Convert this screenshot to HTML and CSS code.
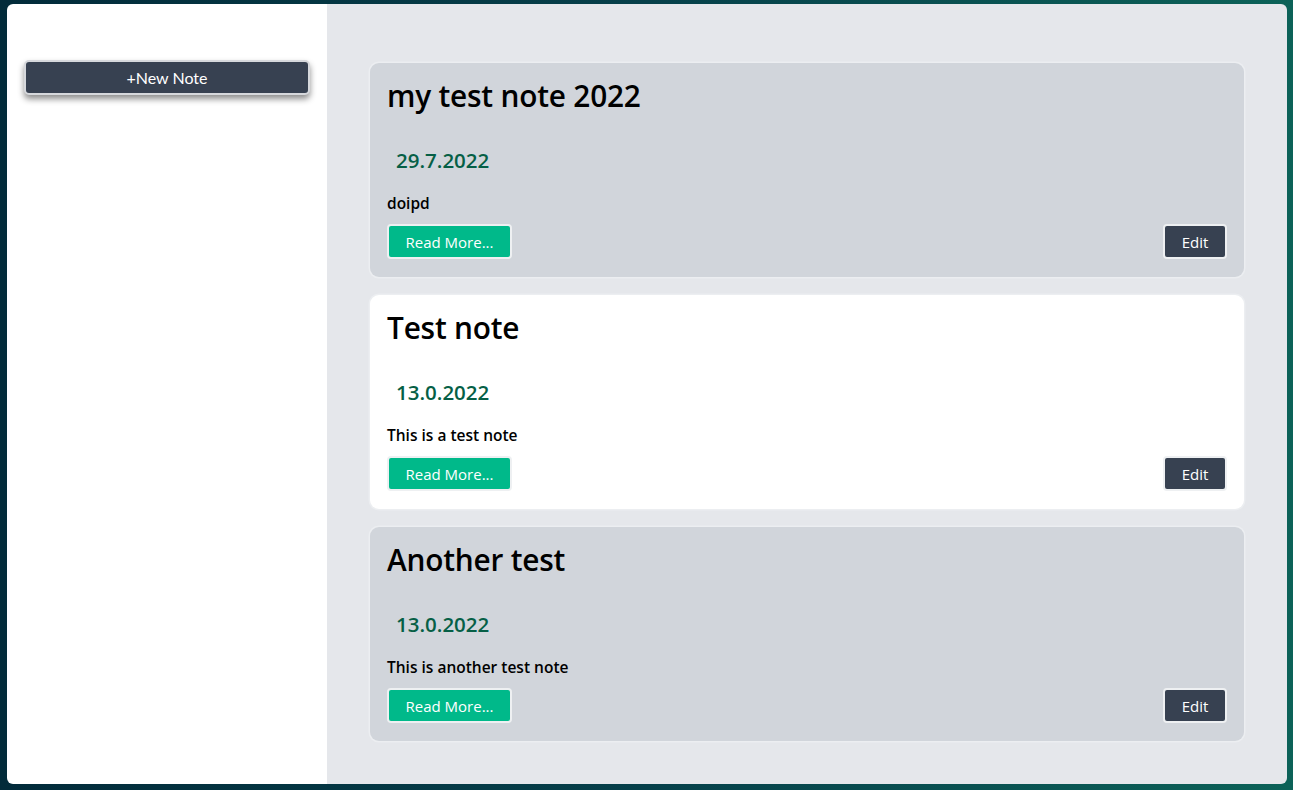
FILE: index.html
```html
<!DOCTYPE html>
<html>
<head>
<meta charset="utf-8">
<link rel="stylesheet" href="styles.css">
</head>
<body>
<div class="app">
  <aside class="sidebar">
    <button class="new-note">+New Note</button>
  </aside>
  <main class="main">
    <div class="note gray">
      <h1 class="title">my test note 2022</h1>
      <div class="date">29.7.2022</div>
      <p class="body">doipd</p>
      <div class="actions">
        <button class="read">Read More...</button>
        <button class="edit">Edit</button>
      </div>
    </div>
    <div class="note white">
      <h1 class="title">Test note</h1>
      <div class="date">13.0.2022</div>
      <p class="body">This is a test note</p>
      <div class="actions">
        <button class="read">Read More...</button>
        <button class="edit">Edit</button>
      </div>
    </div>
    <div class="note gray">
      <h1 class="title">Another test</h1>
      <div class="date">13.0.2022</div>
      <p class="body">This is another test note</p>
      <div class="actions">
        <button class="read">Read More...</button>
        <button class="edit">Edit</button>
      </div>
    </div>
  </main>
</div>
</body>
</html>
```

FILE: styles.css
```css
html, body {
  margin: 0;
  height: 100%;
}
body {
  background: linear-gradient(90deg, #022b3a 0%, #06404a 50%, #0c6258 100%);
  font-family: "Open Sans", "Noto Sans", sans-serif;
  box-sizing: border-box;
  padding: 4px 6px 6px 7px;
}
.app {
  display: flex;
  height: 780px;
}
.sidebar {
  width: 320px;
  background: #ffffff;
  border-radius: 6px 0 0 6px;
  padding: 56px 17px 0 17px;
  box-sizing: border-box;
}
.new-note {
  display: block;
  width: 100%;
  height: 35px;
  background: #374151;
  color: #fff;
  border: 2px solid #d6d8dc;
  border-radius: 5px;
  font-family: "Lato", sans-serif;
  font-size: 16px;
  box-shadow: 0 4px 6px rgba(0,0,0,0.45);
  cursor: pointer;
}
.main {
  flex: 1;
  background: #e5e7eb;
  border-radius: 0 6px 6px 0;
  padding: 59px 43px 0 43px;
  display: flex;
  flex-direction: column;
  gap: 18.5px;
}
.note {
  border-radius: 9px;
  padding: 13px 17px 16px 17px;
  box-shadow: 0 0 0 1.5px #eceef1;
  height: 213.5px;
  box-sizing: border-box;
  flex-shrink: 0;
}
.note.gray { background: #d1d5db; }
.note.white { background: #ffffff; }
.title {
  margin: 0;
  font-size: 29.8px;
  font-weight: 600;
  color: #000;
  line-height: 40px;
  letter-spacing: -0.2px;
}
.date {
  margin: 30px 0 0 9px;
  font-size: 20.5px;
  font-weight: 600;
  color: #065f46;
  line-height: 28px;
}
.body {
  margin: 19px 0 0 0;
  font-size: 15.5px;
  font-weight: 600;
  line-height: 20px;
  color: #000;
}
.actions {
  display: flex;
  justify-content: space-between;
  margin-top: 11px;
}
.actions button {
  height: 35px;
  border: 2px solid #eef0f2;
  border-radius: 4px;
  color: #fff;
  font-family: "Open Sans", sans-serif;
  font-size: 15px;
  padding: 0 14px;
  cursor: pointer;
}
.read {
  background: #00b98a;
  width: 125px;
}
.edit {
  background: #374151;
  width: 64px;
  font-size: 15.5px;
}
```
